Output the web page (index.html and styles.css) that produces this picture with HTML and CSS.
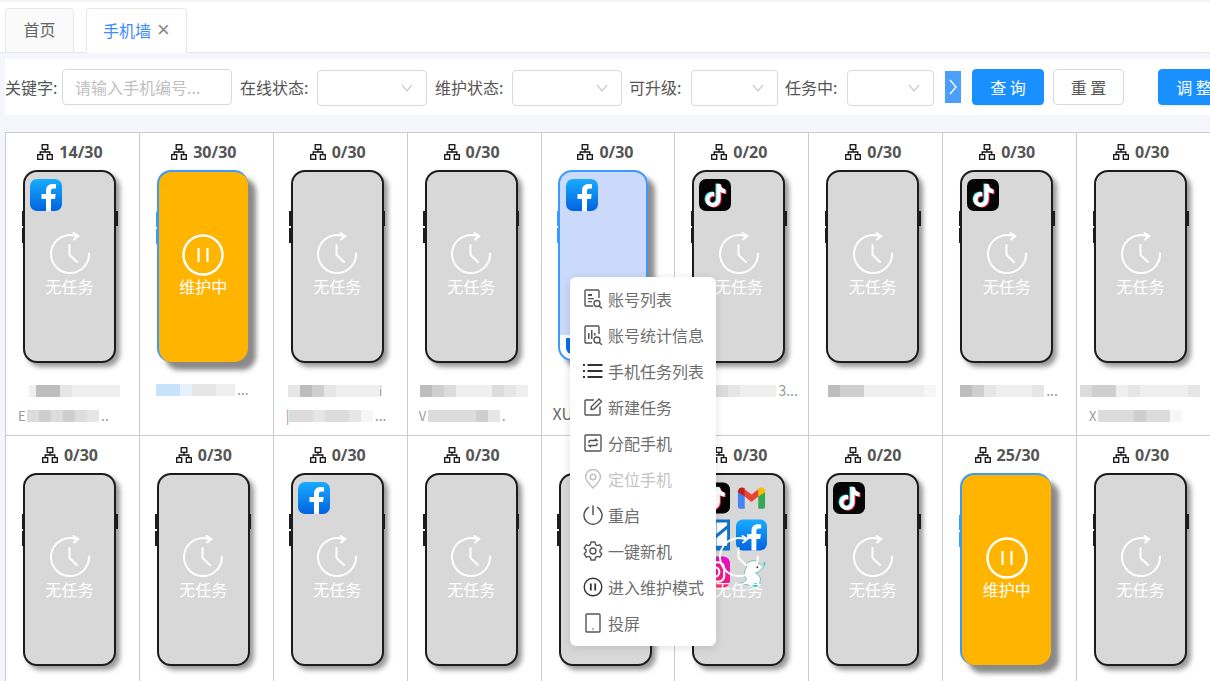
FILE: index.html
```html
<!DOCTYPE html>
<html lang="zh-CN">
<head>
<meta charset="utf-8">
<title>手机墙</title>
<link rel="stylesheet" href="styles.css">
</head>
<body>
<svg class="sprite" width="0" height="0" aria-hidden="true">
  <defs>
    <linearGradient id="fbg" x1="0" y1="0" x2="0" y2="1"><stop offset="0" stop-color="#18acfe"/><stop offset="1" stop-color="#0163e0"/></linearGradient>
    <linearGradient id="igg" x1="0" y1="1" x2="1" y2="0"><stop offset="0" stop-color="#ff8a2b"/><stop offset=".5" stop-color="#f5197c"/><stop offset="1" stop-color="#e00cd8"/></linearGradient>
    <symbol id="net" viewBox="0 0 16 16"><g fill="none" stroke="#111" stroke-width="1.3"><rect x="5.2" y=".7" width="5.6" height="4.6"/><rect x=".7" y="10.7" width="5" height="4.6"/><rect x="10.3" y="10.7" width="5" height="4.6"/><path d="M8 5.3V8M3.2 10.7V8H12.8V10.7"/></g></symbol>
    <symbol id="clock" viewBox="0 0 40 42"><g fill="none" stroke="#fff" stroke-width="2" stroke-linecap="round" stroke-linejoin="round"><path d="M26 4A19 19 0 1 0 39 21.500"/><path d="M23.500 1 L28.500 4 L24 7.500"/><path d="M19.500 13V23L27 30"/></g></symbol>
    <symbol id="pause" viewBox="0 0 42 42"><circle cx="21" cy="21" r="19.5" fill="none" stroke="#fff" stroke-width="2.5"/><path d="M16.5 14v14M25.5 14v14" stroke="#fff" stroke-width="2.2"/></symbol>
    <symbol id="fb" viewBox="0 0 32 32"><rect width="32" height="32" rx="7" fill="url(#fbg)"/><path fill="#fff" d="M21 32V20h4l.7-5H21v-3c0-1.600.7-2.600 2.800-2.600H26V5.200C25 5 23.700 5 22.600 5 18.700 5 16 7.400 16 11.600V15h-4.500v5H16v12z"/></symbol>
    <symbol id="tt" viewBox="0 0 32 32"><rect width="32" height="32" rx="7" fill="#050505"/><path fill="#25f4ee" transform="translate(-1 -.6)" d="M17.500 5h4c.3 3 2 5 5 5.400v4c-2 0-3.700-.6-5-1.600V20.500a7.500 7.500 0 1 1-6.500-7.400v4.100a3.500 3.500 0 1 0 2.500 3.300z"/><path fill="#fe2c55" transform="translate(1 .6)" d="M17.500 5h4c.3 3 2 5 5 5.400v4c-2 0-3.700-.6-5-1.600V20.500a7.500 7.500 0 1 1-6.500-7.400v4.100a3.500 3.500 0 1 0 2.500 3.300z"/><path fill="#fff" d="M17.500 5h4c.3 3 2 5 5 5.400v4c-2 0-3.700-.6-5-1.600V20.500a7.500 7.500 0 1 1-6.500-7.400v4.100a3.500 3.500 0 1 0 2.500 3.300z"/></symbol>
    <symbol id="gm" viewBox="0 0 32 32"><path fill="#4285f4" d="M2 9h7v18H4a2 2 0 0 1-2-2z"/><path fill="#34a853" d="M23 9h7v16a2 2 0 0 1-2 2h-5z"/><path fill="#ea4335" d="M9 7l7 5.500L23 7v7.500l-7 5.500-7-5.500z"/><path fill="#c5221f" d="M2 9c0-3.500 4-5 7-3v8.500L2 10z"/><path fill="#fbbc04" d="M30 9c0-3.500-4-5-7-3v8.500L30 10z"/></symbol>
    <symbol id="ol" viewBox="0 0 32 32"><rect width="32" height="32" fill="#1173c6"/><path d="M18 3h11v3L18 15zM18 19L29 10v17H18z" fill="#fff"/></symbol>
    <symbol id="ig" viewBox="0 0 32 32"><rect width="32" height="32" rx="7" fill="url(#igg)"/><rect x="6" y="6" width="20" height="20" rx="6" fill="none" stroke="#fff" stroke-width="2.200"/><circle cx="16" cy="16" r="5" fill="none" stroke="#fff" stroke-width="2.200"/></symbol>
    <symbol id="dr" viewBox="0 0 32 32"><path fill="#fff" stroke="#5bb5b5" stroke-width=".9" d="M5 27c2 0 5-1 6-4 -3-3-3-8 0-12 -1-3 1-6 3-5 3-3 7-2 9 1 3 1 5 3 5 5l-3 2c-1 2-3 3-5 3 3 2 6 4 5 8-1 2 1 4-3 5-4 1-8 1-10-1-2 0-7 0-7-2z"/><path fill="#20c9c9" d="M16 29l5-2 1 4-5 1zM28 8l2-3v5z"/><circle cx="22" cy="11" r="1" fill="#333"/></symbol>
    <symbol id="m-list" viewBox="0 0 20 20"><g fill="none" stroke="#555" stroke-width="1.400"><path d="M10 17H3a1 1 0 0 1-1-1V2a1 1 0 0 1 1-1h12a1 1 0 0 1 1 1v7"/><circle cx="14" cy="14.500" r="3"/><path d="M16.200 16.700L19 19.500"/></g><path d="M5 5h4v2H5zM5 9h6v1.300H5zM5 12h4v1.300H5z" fill="#555"/></symbol>
    <symbol id="m-stat" viewBox="0 0 20 20"><g fill="none" stroke="#555" stroke-width="1.400"><path d="M9 18H3a1 1 0 0 1-1-1V2a1 1 0 0 1 1-1h12a1 1 0 0 1 1 1v7"/><circle cx="14" cy="15" r="3"/><path d="M16.200 17.200L19 20"/></g><path d="M5 8h1.500v6H5zM8 5h1.500v9H8zM11 8h1.500v2.500H11z" fill="#555"/></symbol>
    <symbol id="m-tasks" viewBox="0 0 20 20"><path d="M4.500 4h15M4.500 10h15M4.500 16h15" stroke="#333" stroke-width="1.800" fill="none"/><path d="M0 3h2v2H0zM0 9h2v2H0zM0 15h2v2H0z" fill="#333"/></symbol>
    <symbol id="m-edit" viewBox="0 0 20 20"><g fill="none" stroke="#555" stroke-width="1.400"><path d="M17 9.500V17a1 1 0 0 1-1 1H3a1 1 0 0 1-1-1V4a1 1 0 0 1 1-1h8"/><path d="M8 12.500l.5-3L16 2l2.500 2.500L11 12z"/></g></symbol>
    <symbol id="m-assign" viewBox="0 0 20 20"><g fill="none" stroke="#555" stroke-width="1.400"><rect x="2" y="2" width="16" height="16" rx="1"/><path d="M6 10V8.500a1 1 0 0 1 1-1h7l-2-1.700M14 10v1.500a1 1 0 0 1-1 1H6l2 1.700"/></g></symbol>
    <symbol id="m-pin" viewBox="0 0 20 20"><g fill="none" stroke="#bfbfbf" stroke-width="1.400"><path d="M10 19C6 15 2.500 11.500 2.500 8a7.500 7.500 0 0 1 15 0c0 3.500-3.500 7-7.500 11z"/><circle cx="10" cy="8" r="2.800"/></g></symbol>
    <symbol id="m-power" viewBox="0 0 20 20"><g fill="none" stroke="#555" stroke-width="1.500"><path d="M6 2.200A9 9 0 1 0 14 2.200"/><path d="M10 .5V10"/></g></symbol>
    <symbol id="m-gear" viewBox="0 0 20 20"><g fill="none" stroke="#555" stroke-width="1.400" stroke-linejoin="round"><path d="M8 1h4l.6 2.600 1.700 1 2.500-.8 2 3.400-1.900 1.800v2l1.900 1.800-2 3.400-2.500-.8-1.700 1L12 19H8l-.6-2.600-1.700-1-2.500.8-2-3.400L3.100 11V9L1.200 7.200l2-3.400 2.500.8 1.700-1z"/><circle cx="10" cy="10" r="3"/></g></symbol>
    <symbol id="m-pause" viewBox="0 0 20 20"><circle cx="10" cy="10" r="8.800" fill="none" stroke="#333" stroke-width="1.400"/><path d="M7.800 6.500v7M12.200 6.500v7" stroke="#333" stroke-width="1.800"/></symbol>
    <symbol id="m-tablet" viewBox="0 0 20 20"><rect x="3" y="1" width="14" height="18" rx="1" fill="none" stroke="#555" stroke-width="1.400"/><circle cx="10" cy="16" r=".8" fill="#555"/></symbol>
    <symbol id="chev" viewBox="0 0 12 8"><path d="M1 1l5 6 5-6" fill="none" stroke="#bbb" stroke-width="1.100"/></symbol>
  </defs>
</svg>

<nav class="tabs">
  <div class="tab tab-home">首页</div>
  <div class="tab tab-active"><span>手机墙</span><span class="tab-x">×</span></div>
</nav>

<section class="filters">
  <label class="lbl w57">关键字:</label>
  <div class="input">请输入手机编号...</div>
  <label class="lbl w77 gap8">在线状态:</label>
  <div class="select w110"><svg class="chev"><use href="#chev"/></svg></div>
  <label class="lbl w77 gap8">维护状态:</label>
  <div class="select w110"><svg class="chev"><use href="#chev"/></svg></div>
  <label class="lbl w62 gap7">可升级:</label>
  <div class="select w87"><svg class="chev"><use href="#chev"/></svg></div>
  <label class="lbl w62 gap7">任务中:</label>
  <div class="select w87"><svg class="chev"><use href="#chev"/></svg></div>
  <div class="toggle"><svg viewBox="0 0 16 32" width="16" height="32"><path d="M5 9l6 7-6 7" fill="none" stroke="#fff" stroke-width="1.300"/></svg></div>
  <button class="btn primary b-query">查 询</button>
  <button class="btn b-reset">重 置</button>
  <button class="btn primary b-adjust">调 整</button>
</section>

<main class="wall">
  <div class="cell">
    <div class="count"><svg class="net"><use href="#net"/></svg>14/30</div>
    <div class="phone"><div class="apps"><svg class="app"><use href="#fb"/></svg></div><svg class="clock"><use href="#clock"/></svg><span class="st">无任务</span></div>
    <div class="nm ox23"><i class="t s a"></i><i class="t c"></i><i class="t c"></i><i class="t e"></i><i class="t a"></i><i class="t a"></i><i class="t a"></i><i class="t a"></i></div>
    <div class="nm ox12"><span class="ch">E</span><i class="t b"></i><i class="t d"></i><i class="t b"></i><i class="t d"></i><i class="t b"></i><i class="t e"></i><span class="dots">..</span></div>
  </div>
  <div class="cell">
    <div class="count"><svg class="net"><use href="#net"/></svg>30/30</div>
    <div class="phone maint"><svg class="pause"><use href="#pause"/></svg><span class="st">维护中</span></div>
    <div class="nm ox16"><i class="t u"></i><i class="t u"></i><i class="t v"></i><i class="t e"></i><i class="t e"></i><i class="t a"></i><i class="t s a"></i><span class="dots">...</span></div>
    <div class="nm"></div>
  </div>
  <div class="cell">
    <div class="count"><svg class="net"><use href="#net"/></svg>0/30</div>
    <div class="phone"><svg class="clock"><use href="#clock"/></svg><span class="st">无任务</span></div>
    <div class="nm ox14"><i class="t e"></i><i class="t c"></i><i class="t d"></i><i class="t e"></i><i class="t a"></i><i class="t a"></i><i class="t a"></i><i class="t s a"></i><span class="ch">i</span></div>
    <div class="nm ox12"><span class="bar">|</span><i class="t b"></i><i class="t b"></i><i class="t e"></i><i class="t b"></i><i class="t b"></i><i class="t e"></i><i class="t f"></i><span class="dots">...</span></div>
  </div>
  <div class="cell">
    <div class="count"><svg class="net"><use href="#net"/></svg>0/30</div>
    <div class="phone"><svg class="clock"><use href="#clock"/></svg><span class="st">无任务</span></div>
    <div class="nm ox12"><i class="t c"></i><i class="t d"></i><i class="t b"></i><i class="t a"></i><i class="t a"></i><i class="t a"></i><i class="t b"></i><i class="t e"></i><i class="t a"></i></div>
    <div class="nm ox11"><span class="ch">V</span><i class="t b"></i><i class="t b"></i><i class="t b"></i><i class="t b"></i><i class="t d"></i><i class="t e"></i><span class="dots">.</span></div>
  </div>
  <div class="cell">
    <div class="count"><svg class="net"><use href="#net"/></svg>0/30</div>
    <div class="phone selected"><div class="apps"><svg class="app"><use href="#fb"/></svg><div class="app-sliver"></div></div></div>
    <div class="nm"></div>
    <div class="nm ox11"><span class="plain">XU</span></div>
  </div>
  <div class="cell">
    <div class="count"><svg class="net"><use href="#net"/></svg>0/20</div>
    <div class="phone"><div class="apps"><svg class="app"><use href="#tt"/></svg></div><svg class="clock"><use href="#clock"/></svg><span class="st">无任务</span></div>
    <div class="nm ox40"><i class="t b"></i><i class="t e"></i><i class="t a"></i><i class="t a"></i><i class="t a"></i><span class="dots">3...</span></div>
    <div class="nm"></div>
  </div>
  <div class="cell">
    <div class="count"><svg class="net"><use href="#net"/></svg>0/30</div>
    <div class="phone"><svg class="clock"><use href="#clock"/></svg><span class="st">无任务</span></div>
    <div class="nm ox19"><i class="t c"></i><i class="t d"></i><i class="t d"></i><i class="t a"></i><i class="t a"></i><i class="t a"></i><i class="t a"></i><i class="t a"></i><i class="t f"></i></div>
    <div class="nm"></div>
  </div>
  <div class="cell">
    <div class="count"><svg class="net"><use href="#net"/></svg>0/30</div>
    <div class="phone"><div class="apps"><svg class="app"><use href="#tt"/></svg></div><svg class="clock"><use href="#clock"/></svg><span class="st">无任务</span></div>
    <div class="nm ox17"><i class="t c"></i><i class="t d"></i><i class="t e"></i><i class="t a"></i><i class="t a"></i><i class="t a"></i><i class="t e"></i><span class="dots">...</span></div>
    <div class="nm"></div>
  </div>
  <div class="cell">
    <div class="count"><svg class="net"><use href="#net"/></svg>0/30</div>
    <div class="phone"><svg class="clock"><use href="#clock"/></svg><span class="st">无任务</span></div>
    <div class="nm ox3"><i class="t b"></i><i class="t d"></i><i class="t d"></i><i class="t a"></i><i class="t e"></i><i class="t a"></i><i class="t a"></i><i class="t a"></i><i class="t a"></i><i class="t e"></i></div>
    <div class="nm ox12"><span class="ch">X</span><i class="t b"></i><i class="t b"></i><i class="t b"></i><i class="t d"></i><i class="t b"></i><i class="t b"></i><i class="t f"></i></div>
  </div>

  <div class="cell">
    <div class="count"><svg class="net"><use href="#net"/></svg>0/30</div>
    <div class="phone"><svg class="clock"><use href="#clock"/></svg><span class="st">无任务</span></div>
  </div>
  <div class="cell">
    <div class="count"><svg class="net"><use href="#net"/></svg>0/30</div>
    <div class="phone"><svg class="clock"><use href="#clock"/></svg><span class="st">无任务</span></div>
  </div>
  <div class="cell">
    <div class="count"><svg class="net"><use href="#net"/></svg>0/30</div>
    <div class="phone"><div class="apps"><svg class="app"><use href="#fb"/></svg></div><svg class="clock"><use href="#clock"/></svg><span class="st">无任务</span></div>
  </div>
  <div class="cell">
    <div class="count"><svg class="net"><use href="#net"/></svg>0/30</div>
    <div class="phone"><svg class="clock"><use href="#clock"/></svg><span class="st">无任务</span></div>
  </div>
  <div class="cell">
    <div class="count"><svg class="net"><use href="#net"/></svg>0/30</div>
    <div class="phone"><svg class="clock"><use href="#clock"/></svg><span class="st">无任务</span></div>
  </div>
  <div class="cell">
    <div class="count"><svg class="net"><use href="#net"/></svg>0/30</div>
    <div class="phone"><div class="apps apps-grid"><svg class="app"><use href="#tt"/></svg><svg class="app"><use href="#gm"/></svg><svg class="app"><use href="#ol"/></svg><svg class="app"><use href="#fb"/></svg><svg class="app"><use href="#ig"/></svg><svg class="app"><use href="#dr"/></svg></div><svg class="clock"><use href="#clock"/></svg><span class="st">无任务</span></div>
  </div>
  <div class="cell">
    <div class="count"><svg class="net"><use href="#net"/></svg>0/20</div>
    <div class="phone"><div class="apps"><svg class="app"><use href="#tt"/></svg></div><svg class="clock"><use href="#clock"/></svg><span class="st">无任务</span></div>
  </div>
  <div class="cell">
    <div class="count"><svg class="net"><use href="#net"/></svg>25/30</div>
    <div class="phone maint"><svg class="pause"><use href="#pause"/></svg><span class="st">维护中</span></div>
  </div>
  <div class="cell">
    <div class="count"><svg class="net"><use href="#net"/></svg>0/30</div>
    <div class="phone"><svg class="clock"><use href="#clock"/></svg><span class="st">无任务</span></div>
  </div>
</main>

<ul class="menu">
  <li><svg class="mi"><use href="#m-list"/></svg>账号列表</li>
  <li><svg class="mi"><use href="#m-stat"/></svg>账号统计信息</li>
  <li><svg class="mi"><use href="#m-tasks"/></svg>手机任务列表</li>
  <li><svg class="mi"><use href="#m-edit"/></svg>新建任务</li>
  <li><svg class="mi"><use href="#m-assign"/></svg>分配手机</li>
  <li class="off"><svg class="mi"><use href="#m-pin"/></svg>定位手机</li>
  <li><svg class="mi"><use href="#m-power"/></svg>重启</li>
  <li><svg class="mi"><use href="#m-gear"/></svg>一键新机</li>
  <li><svg class="mi"><use href="#m-pause"/></svg>进入维护模式</li>
  <li><svg class="mi"><use href="#m-tablet"/></svg>投屏</li>
</ul>
</body>
</html>
```

FILE: styles.css
```css
* { box-sizing: border-box; }
html, body { margin: 0; height: 100%; }
body {
  position: relative;
  width: 1210px;
  height: 681px;
  overflow: hidden;
  background: #f4f6fb;
  font-family: "Noto Sans CJK SC", "Noto Sans", sans-serif;
  font-size: 16px;
  color: #555;
  padding-top: 2px;
}
.sprite { position: absolute; }

.tabs {
  height: 51px;
  background: #fff;
  border-bottom: 1px solid #e6e6e6;
  display: flex;
  align-items: flex-end;
  padding: 0 0 0 5px;
  gap: 12px;
}
.tab {
  height: 45px;
  margin-bottom: -1px;
  padding-bottom: 3px;
  border: 1px solid #e8e8e8;
  border-bottom: 0;
  border-radius: 4px 4px 0 0;
  display: flex;
  align-items: center;
  justify-content: center;
}
.tab-home { width: 69px; background: #fafafa; color: #666; border-bottom: 1px solid #e6e6e6; }
.tab-active { width: 101px; background: #fff; color: #3d8bfd; }
.tab-x { color: #888; font-size: 22px; font-weight: 300; margin-left: 6px; line-height: 1; font-family: "Liberation Sans", sans-serif; }

.filters {
  margin: 6px 0 17px 5px;
  height: 56px;
  background: #fff;
  display: flex;
  align-items: center;
  white-space: nowrap;
}
.lbl { color: #555; flex: none; }
.w57 { width: 57px; }
.w62 { width: 62px; }
.w77 { width: 77px; }
.gap7 { margin-left: 7px; }
.gap8 { margin-left: 8px; }
.input {
  width: 170px; height: 36px; flex: none;
  border: 1px solid #d9d9d9; border-radius: 4px;
  padding-left: 12px; line-height: 34px; color: #bfbfbf;
}
.select {
  height: 36px; flex: none; margin-top: 1px;
  border: 1px solid #d9d9d9; border-radius: 4px;
  display: flex; align-items: center; justify-content: flex-end;
  padding-right: 13px;
}
.w110 { width: 110px; }
.w87 { width: 87px; }
.chev { width: 12px; height: 8px; }
.toggle { width: 16px; height: 32px; flex: none; margin-left: 11px; background: #4a9ffb; display: flex; }
.btn {
  height: 36px; flex: none;
  border: 1px solid #d9d9d9; border-radius: 4px;
  background: #fff; color: #555;
  font: 16px "Noto Sans CJK SC", sans-serif;
  padding: 0;
}
.primary { background: #1890ff; border-color: #1890ff; color: #fff; box-shadow: 0 2px 2px rgba(0,0,0,.06); }
.b-query { width: 72px; margin-left: 11px; }
.b-reset { width: 71px; margin-left: 9px; }
.b-adjust { width: 72px; margin-left: 34px; }

.wall {
  margin-left: 5px;
  width: 1205px;
  background: #fff;
  border-top: 1px solid #ccc;
  display: grid;
  grid-template-columns: repeat(9, 1fr);
  grid-auto-rows: 303px;
}
.cell {
  border-left: 1px solid #ccc;
  border-bottom: 1px solid #ccc;
  min-width: 0;
}
.count {
  height: 37px;
  padding: 0 5px 0 0;
  display: flex;
  justify-content: center;
  align-items: center;
  gap: 6px;
  font: 700 16px/18px "Open Sans", sans-serif;
  color: #555;
}
.net { width: 16px; height: 16px; flex: none; }

.phone {
  position: relative;
  width: 93px;
  height: 193px;
  margin-left: 17px;
  border: 2.5px solid #1c1c1c;
  border-radius: 14px;
  background: #d8d8d8;
  box-shadow: 4px 4px 5px #999;
  display: flex;
  flex-direction: column;
  align-items: center;
  padding-top: 62px;
}
.phone::before {
  content: "";
  position: absolute;
  left: -3.5px; top: 39px;
  width: 2px; height: 15px;
  background: #1c1c1c;
  box-shadow: 0 17px 0 #1c1c1c;
}
.phone::after {
  content: "";
  position: absolute;
  right: -3.5px; top: 39px;
  width: 2px; height: 15px;
  background: #1c1c1c;
}
.maint {
  width: 91px;
  border: 0;
  border-left: 2px solid #3a9bff;
  border-top: 2px solid #3a9bff;
  background: #ffb400;
  box-shadow: 8px 8px 5px #8a8a8a;
  height: 192px;
  padding-top: 64px;
}
.maint::before { background: #3a9bff; box-shadow: 0 17px 0 #3a9bff; left: -3px; top: 40px; }
.maint::after { display: none; }
.maint .st { margin-top: 0; }
.selected {
  width: 90px;
  height: 191px;
  margin-left: 16px;
  border: 2px solid #3a9bff;
  background: linear-gradient(#cbd9fb 163px, #fff 163px);
  box-shadow: 7px 7px 5px #8f8f8f;
}
.selected::before { background: #3a9bff; box-shadow: 0 17px 0 #3a9bff; left: -3px; }
.selected::after { display: none; }
.selected .apps { left: 6px; }

.clock { width: 40px; height: 42px; margin-top: -2px; position: relative; z-index: 1; flex: none; }
.pause { width: 42px; height: 42px; margin-top: -2px; flex: none; }
.st { color: #fff; font-size: 16px; line-height: 20px; margin-top: 2px; position: relative; z-index: 1; }
.apps { position: absolute; left: 5px; top: 6.5px; display: flex; flex-direction: column; }
.apps-grid { display: grid; grid-template-columns: 31px 31px; grid-auto-rows: 32px; gap: 5px 6px; }
.app { width: 32px; height: 32px; display: block; }
.apps-grid .app { width: 31px; height: 32px; }
.app-sliver { width: 32px; height: 16px; margin-top: 127px; background: #0a70e6; border-radius: 0 0 6px 6px; }

.nm {
  height: 25px;
  display: flex;
  align-items: center;
  white-space: nowrap;
  color: #888;
  line-height: 25px;
  font-size: 14px;
}
.phone + .nm { margin-top: 15px; }
.ox3 { padding-left: 3px; }
.ox11 { padding-left: 11px; }
.ox12 { padding-left: 12px; }
.ox14 { padding-left: 14px; }
.ox16 { padding-left: 16px; }
.ox17 { padding-left: 17px; }
.ox19 { padding-left: 19px; }
.ox23 { padding-left: 23px; }
.ox40 { padding-left: 41px; }
.t { display: block; width: 12px; height: 12px; flex: none; }
.s { width: 7px; }
.a { background: #efefef; }
.b { background: #dcdcdc; }
.c { background: #bdbdbd; }
.d { background: #cfcfcf; }
.e { background: #e6e6e6; }
.f { background: #f6f6f6; }
.u { background: #c8e2fb; }
.v { background: #e6f1fb; }
.ch { width: 9px; font-size: 13px; overflow: hidden; color: #999; flex: none; }
.bar { width: 3px; overflow: hidden; color: #999; flex: none; }
.dots { margin-left: 2px; color: #999; }
.plain { color: #666; font-size: 16px; }

.menu {
  position: absolute;
  left: 570px; top: 277px;
  width: 146px; height: 369px;
  margin: 0;
  padding: 4px 0;
  list-style: none;
  background: #fff;
  border-radius: 6px;
  box-shadow: 0 2px 10px rgba(0,0,0,.12);
  z-index: 5;
}
.menu li {
  height: 36px;
  display: flex;
  align-items: center;
  padding-left: 13px;
  color: #6e6e6e;
  white-space: nowrap;
}
.menu li.off { color: #c4c4c4; }
.mi { width: 20px; height: 20px; flex: none; margin-right: 5px; }
```
